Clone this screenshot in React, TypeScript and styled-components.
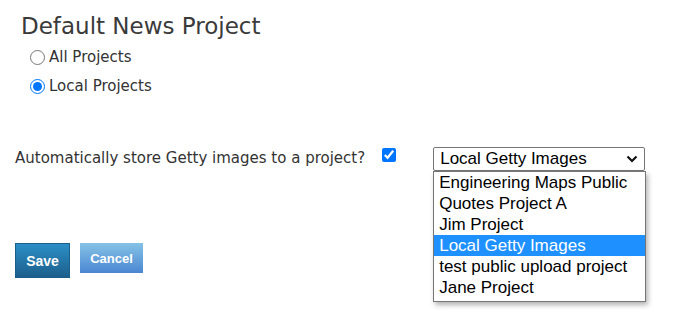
import styled, { createGlobalStyle } from "styled-components";

const projects = [
  "Engineering Maps Public",
  "Quotes Project A",
  "Jim Project",
  "Local Getty Images",
  "test public upload project",
  "Jane Project",
];

const selected = "Local Getty Images";

const App = () => {
  return (
    <Page>
      <GlobalStyle />
      <Title>Default News Project</Title>
      <RadioGroup>
        <RadioLabel>
          <Radio type="radio" name="scope" />
          All Projects
        </RadioLabel>
        <RadioLabel>
          <Radio type="radio" name="scope" defaultChecked />
          Local Projects
        </RadioLabel>
      </RadioGroup>
      <StoreRow>
        <StoreText>Automatically store Getty images to a project?</StoreText>
        <Check type="checkbox" defaultChecked />
        <SelectWrap>
          <SelectBox>
            <span>{selected}</span>
            <svg width="12" height="8" viewBox="0 0 12 8">
              <path
                d="M1.5 1.5 L6 6 L10.5 1.5"
                fill="none"
                stroke="#111"
                strokeWidth="2.2"
              />
            </svg>
          </SelectBox>
          <OptionList>
            {projects.map((p) => (
              <Option key={p} $active={p === selected}>
                {p}
              </Option>
            ))}
          </OptionList>
        </SelectWrap>
      </StoreRow>
      <Buttons>
        <SaveButton>Save</SaveButton>
        <CancelButton>Cancel</CancelButton>
      </Buttons>
    </Page>
  );
};

export default App;

const GlobalStyle = createGlobalStyle`
  body {
    margin: 0;
    background: #fff;
    font-family: "DejaVu Sans", Verdana, sans-serif;
    color: #333;
  }
`;

const Page = styled.div`
  box-sizing: border-box;
  min-height: 100vh;
  padding: 12px 0 0 15px;
`;

const Title = styled.h1`
  margin: 0 0 0 6px;
  font-size: 23px;
  font-weight: normal;
  line-height: 28px;
  color: #3a3a3a;
`;

const RadioGroup = styled.div`
  display: flex;
  flex-direction: column;
  gap: 9px;
  margin: 7px 0 0 15px;
`;

const RadioLabel = styled.label`
  display: flex;
  align-items: center;
  font-size: 15px;
  line-height: 20px;
  color: #333;
`;

const Radio = styled.input`
  width: 15px;
  height: 15px;
  margin: 0 4px 0 0;
`;

const StoreRow = styled.div`
  display: flex;
  align-items: flex-start;
  margin-top: 52px;
`;

const StoreText = styled.span`
  font-size: 15px;
  line-height: 20px;
  color: #333;
`;

const Check = styled.input`
  width: 14px;
  height: 14px;
  margin: 0 0 0 17px;
`;

const SelectWrap = styled.div`
  position: relative;
  margin-left: 37px;
  margin-top: -1px;
`;

const SelectBox = styled.div`
  box-sizing: border-box;
  width: 212px;
  height: 24px;
  border: 1px solid #767676;
  border-radius: 2px;
  display: flex;
  align-items: center;
  justify-content: space-between;
  padding: 0 6px 0 6px;
  font-family: "Liberation Sans", Arial, sans-serif;
  font-size: 17px;
  color: #000;
`;

const OptionList = styled.ul`
  position: absolute;
  top: 24px;
  left: 0;
  box-sizing: border-box;
  width: 213px;
  margin: 0;
  padding: 0 0 3px;
  list-style: none;
  background: #fff;
  border: 1px solid #767676;
  box-shadow: 2px 3px 5px rgba(0, 0, 0, 0.3);
`;

const Option = styled.li<{ $active?: boolean }>`
  height: 21px;
  line-height: 21px;
  padding: 0 5px;
  font-family: "Liberation Sans", Arial, sans-serif;
  font-size: 17px;
  color: ${(p) => (p.$active ? "#fff" : "#000")};
  background: ${(p) => (p.$active ? "#1e90ff" : "transparent")};
`;

const Buttons = styled.div`
  display: flex;
  align-items: flex-start;
  gap: 10px;
  margin-top: 72px;
`;

const SaveButton = styled.button`
  box-sizing: border-box;
  width: 55px;
  height: 35px;
  padding: 1px 0 0;
  border: 1px solid #1a5f8a;
  background: linear-gradient(#2b8fc6, #1d5f8c);
  color: #fff;
  font-family: "Liberation Sans", Arial, sans-serif;
  font-weight: bold;
  font-size: 14px;
`;

const CancelButton = styled.button`
  box-sizing: border-box;
  width: 63px;
  height: 30px;
  padding: 0;
  border: none;
  background: linear-gradient(#86c3e6, #4a86d2);
  color: #fff;
  font-family: "Liberation Sans", Arial, sans-serif;
  font-weight: bold;
  font-size: 13px;
`;
